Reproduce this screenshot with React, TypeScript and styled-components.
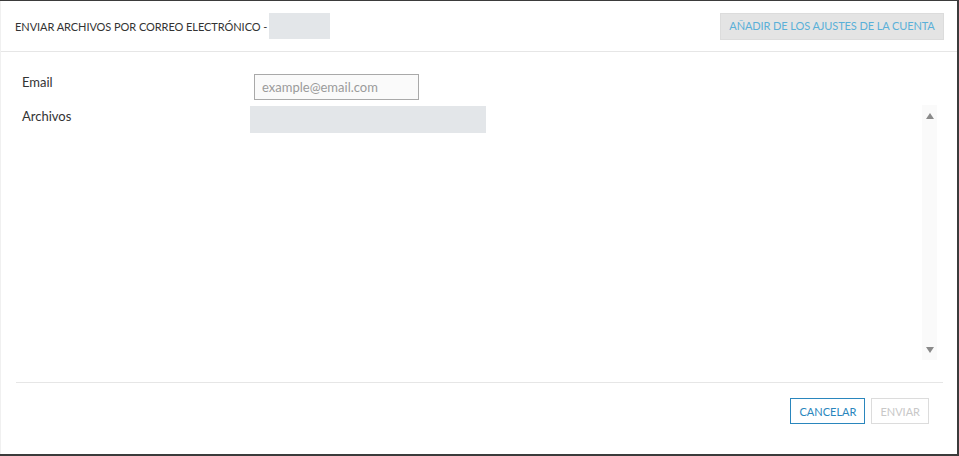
import * as React from 'react';
import styled, { createGlobalStyle } from 'styled-components';

const GlobalStyle = createGlobalStyle`
  *, *::before, *::after {
    box-sizing: border-box;
  }
  html, body {
    margin: 0;
    padding: 0;
    background: #3b3b3b;
  }
  body {
    font-family: Lato, 'Open Sans', sans-serif;
    color: #333;
  }
`;

const App = () => {
  return (
    <>
      <GlobalStyle />
      <Dialog>
        <Header>
          <Title>
            Enviar archivos por correo electrónico -
            <Redacted $width={61} $height={26} />
          </Title>
          <AccountButton>Añadir de los ajustes de la cuenta</AccountButton>
        </Header>
        <Body>
          <EmailRow>
            <Label>Email</Label>
            <EmailInput placeholder="example@email.com" />
          </EmailRow>
          <FilesRow>
            <Label $top={3}>Archivos</Label>
            <FilesArea>
              <Redacted $width={236} $height={27} />
            </FilesArea>
            <ScrollTrack>
              <Arrow $dir="up" />
              <Arrow $dir="down" />
            </ScrollTrack>
          </FilesRow>
        </Body>
        <Footer>
          <OutlineButton>Cancelar</OutlineButton>
          <OutlineButton $disabled>Enviar</OutlineButton>
        </Footer>
      </Dialog>
    </>
  );
};

const Dialog = styled.div`
  margin: 1px 2px 2px 0;
  width: 957px;
  height: 453px;
  background: #fff;
  display: flex;
  flex-direction: column;
  border-left: 1px solid #f0f0f0;
`;

const Header = styled.div`
  height: 51px;
  flex-shrink: 0;
  border-bottom: 1px solid #e6e6e6;
  display: flex;
  align-items: center;
  justify-content: space-between;
  padding: 0 13px 0 14px;
`;

const Title = styled.div`
  display: flex;
  align-items: center;
  gap: 2px;
  font-size: 11px;
  letter-spacing: -0.06px;
  text-transform: uppercase;
  color: #333;
`;

const Redacted = styled.span<{ $width: number; $height: number }>`
  display: block;
  width: ${(p) => p.$width}px;
  height: ${(p) => p.$height}px;
  background: #e3e6e9;
`;

const AccountButton = styled.button`
  height: 27px;
  width: 224px;
  padding: 0;
  border: 1px solid #dcdcdc;
  background: #e4e4e4;
  color: #5ab0d8;
  font-family: inherit;
  font-size: 11px;
  line-height: 14px;
  text-transform: uppercase;
  letter-spacing: -0.1px;
`;

const Body = styled.div`
  flex: 1;
  display: flex;
  flex-direction: column;
  padding: 22px 20px 0 21px;
`;

const EmailRow = styled.div`
  display: flex;
  align-items: flex-start;
`;

const Label = styled.div<{ $top?: number }>`
  width: 232px;
  flex-shrink: 0;
  font-size: 13px;
  line-height: 16px;
  padding-top: ${(p) => p.$top ?? 0}px;
  color: #333;
`;

const EmailInput = styled.input`
  width: 165px;
  height: 26px;
  border: 1px solid #a9a9a9;
  background: #fafafa;
  padding: 0 7px;
  font-family: inherit;
  font-size: 13px;
  color: #333;
  outline: none;
  &::placeholder {
    color: #9a9a9a;
  }
`;

const FilesRow = styled.div`
  display: flex;
  height: 255px;
  margin-top: 5px;
`;

const FilesArea = styled.div`
  flex: 1;
  padding-top: 1px;
  margin-left: -4px;
`;

const ScrollTrack = styled.div`
  width: 15px;
  background: #fafafa;
  display: flex;
  flex-direction: column;
  justify-content: space-between;
  align-items: center;
  padding: 8px 0 7px;
`;

const Arrow = styled.span<{ $dir: 'up' | 'down' }>`
  width: 0;
  height: 0;
  border-left: 4.5px solid transparent;
  border-right: 4.5px solid transparent;
  ${(p) =>
    p.$dir === 'up'
      ? 'border-bottom: 6px solid #8a8a8a;'
      : 'border-top: 6px solid #8a8a8a;'}
`;

const Footer = styled.div`
  margin: 0 14px 0 15px;
  border-top: 1px solid #e6e6e6;
  height: 72px;
  flex-shrink: 0;
  display: flex;
  justify-content: flex-end;
  align-items: flex-start;
  padding: 15px 14px 0 0;
  gap: 6px;
`;

const OutlineButton = styled.button<{ $disabled?: boolean }>`
  height: 26px;
  padding: 0 8px;
  background: #fff;
  font-family: inherit;
  font-size: 11px;
  text-transform: uppercase;
  border: 1px solid ${(p) => (p.$disabled ? '#dcdcdc' : '#2a86bd')};
  color: ${(p) => (p.$disabled ? '#c8c8c8' : '#2a86bd')};
`;

export default App;
